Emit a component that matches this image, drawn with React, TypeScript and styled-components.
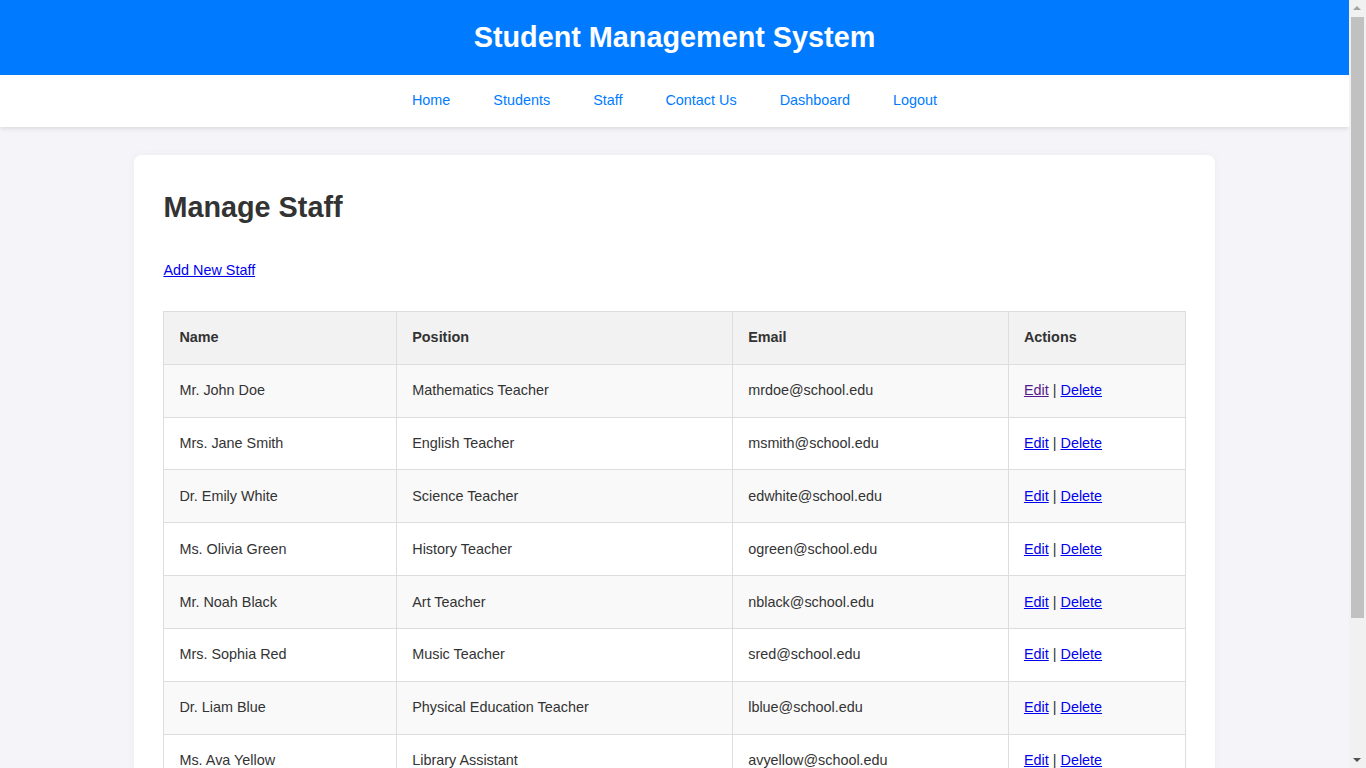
import React from "react";
import styled, { createGlobalStyle } from "styled-components";

const GlobalStyle = createGlobalStyle`
  html, body {
    margin: 0;
    padding: 0;
  }
  body {
    background: #f4f4f9;
    font-family: "Liberation Sans", Arial, sans-serif;
    color: #333;
    line-height: 1.6;
    font-size: 14.4px;
  }
`;

const Page = styled.div`
  width: calc(100% - 17px);
`;

const Header = styled.header`
  background: #007bff;
  color: #fff;
  text-align: center;
  padding: 14px 0 15px;
`;

const Title = styled.h1`
  margin: 0;
  font-size: 28.8px;
  font-weight: bold;
  line-height: 46px;
`;

const Nav = styled.nav`
  background: #fff;
  display: flex;
  justify-content: center;
  gap: 43px;
  padding: 14px 0 15px;
  box-shadow: 0 2px 4px rgba(0, 0, 0, 0.1);
`;

const NavLink = styled.a`
  color: #007bff;
  text-decoration: none;
  font-size: 14.4px;
  line-height: 23px;
`;

const Main = styled.main`
  padding: 28px 0 108px;
`;

const Card = styled.section`
  width: calc(80% + 1px);
  margin: 0 auto;
  background: #fff;
  border-radius: 8px;
  padding: 29px 29px 29px;
  box-shadow: 0 0 8px rgba(0, 0, 0, 0.04);
  box-sizing: border-box;
`;

const PageTitle = styled.h2`
  margin: 0 0 29px;
  font-size: 28.8px;
  line-height: 46px;
  color: #333;
`;

const AddLink = styled.a`
  display: inline-block;
  color: #0000ee;
  text-decoration: underline;
  font-size: 14.4px;
  line-height: 23px;
  margin-bottom: 29px;
`;

const Table = styled.table`
  width: 100%;
  border-collapse: collapse;
  table-layout: fixed;
`;

const HeadCell = styled.th<{ $w: number }>`
  width: ${(p) => p.$w}%;
  box-sizing: border-box;
  background: #f2f2f2;
  border: 1px solid #ddd;
  padding: 14.4px 15px;
  text-align: left;
  font-weight: bold;
  color: #333;
  line-height: 1.6;
`;

const Row = styled.tr<{ $alt: boolean }>`
  background: ${(p) => (p.$alt ? "#f9f9f9" : "#fff")};
`;

const Cell = styled.td`
  border: 1px solid #ddd;
  padding: 14.4px 15px;
  color: #333;
  line-height: 1.6;
`;

const ActionLink = styled.a<{ $visited?: boolean }>`
  color: ${(p) => (p.$visited ? "#551a8b" : "#0000ee")};
  text-decoration: underline;
`;

/* Browser scrollbar, as seen in the screenshot */
const ScrollTrack = styled.div`
  position: fixed;
  top: 0;
  right: 0;
  bottom: 0;
  width: 17px;
  background: #f1f1f1;
`;

const ScrollThumb = styled.div`
  position: absolute;
  top: 17px;
  left: 2px;
  width: 13px;
  height: 601px;
  background: #c1c1c1;
`;

const Arrow = styled.div<{ $down?: boolean }>`
  position: absolute;
  left: 4px;
  width: 0;
  height: 0;
  border-left: 4.5px solid transparent;
  border-right: 4.5px solid transparent;
  ${(p) =>
    p.$down
      ? `bottom: 6px; border-top: 4.5px solid #505050;`
      : `top: 6px; border-bottom: 4.5px solid #a3a3a3;`}
`;

const staff = [
  ["Mr. John Doe", "Mathematics Teacher", "mrdoe@school.edu"],
  ["Mrs. Jane Smith", "English Teacher", "msmith@school.edu"],
  ["Dr. Emily White", "Science Teacher", "edwhite@school.edu"],
  ["Ms. Olivia Green", "History Teacher", "ogreen@school.edu"],
  ["Mr. Noah Black", "Art Teacher", "nblack@school.edu"],
  ["Mrs. Sophia Red", "Music Teacher", "sred@school.edu"],
  ["Dr. Liam Blue", "Physical Education Teacher", "lblue@school.edu"],
  ["Ms. Ava Yellow", "Library Assistant", "avyellow@school.edu"],
];

export default function App() {
  return (
    <>
      <GlobalStyle />
      <Page>
        <Header>
          <Title>Student Management System</Title>
        </Header>
        <Nav>
          <NavLink href="#">Home</NavLink>
          <NavLink href="#">Students</NavLink>
          <NavLink href="#">Staff</NavLink>
          <NavLink href="#">Contact Us</NavLink>
          <NavLink href="#">Dashboard</NavLink>
          <NavLink href="#">Logout</NavLink>
        </Nav>
        <Main>
          <Card>
            <PageTitle>Manage Staff</PageTitle>
            <AddLink href="#">Add New Staff</AddLink>
            <Table>
              <thead>
                <tr>
                  <HeadCell $w={22.8}>Name</HeadCell>
                  <HeadCell $w={32.9}>Position</HeadCell>
                  <HeadCell $w={27}>Email</HeadCell>
                  <HeadCell $w={17.3}>Actions</HeadCell>
                </tr>
              </thead>
              <tbody>
                {staff.map((s, i) => (
                  <Row key={s[2]} $alt={i % 2 === 0}>
                    <Cell>{s[0]}</Cell>
                    <Cell>{s[1]}</Cell>
                    <Cell>{s[2]}</Cell>
                    <Cell>
                      <ActionLink href="#" $visited={i === 0}>
                        Edit
                      </ActionLink>{" "}
                      | <ActionLink href="#">Delete</ActionLink>
                    </Cell>
                  </Row>
                ))}
              </tbody>
            </Table>
          </Card>
        </Main>
      </Page>
      <ScrollTrack>
        <Arrow />
        <ScrollThumb />
        <Arrow $down />
      </ScrollTrack>
    </>
  );
}
